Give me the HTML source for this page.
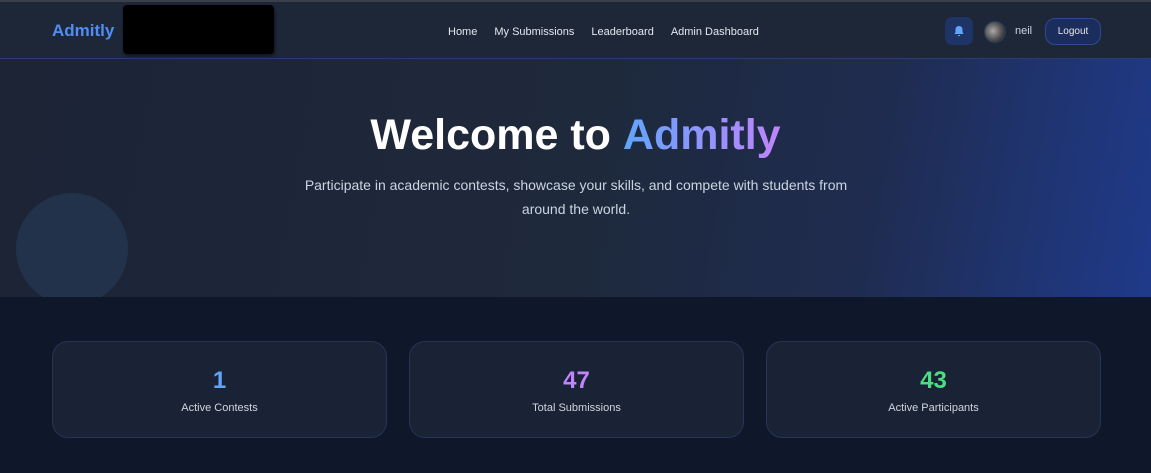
<!DOCTYPE html>
<html><head><style>
*{margin:0;padding:0;box-sizing:border-box}
body{width:1151px;height:473px;overflow:hidden;background:#0f172a;font-family:"Liberation Sans",sans-serif;position:relative}
.nav{position:absolute;top:0;left:0;width:1151px;height:59px;background:#1e2738;border-top:2px solid #3a3f4a;border-bottom:1px solid #2a3d73}
.logo{position:absolute;left:52px;top:19px;font-size:17px;font-weight:bold;color:#4f8ef0}
.black{position:absolute;left:123px;top:3px;width:151px;height:49px;background:#000;border-radius:4px;box-shadow:1px 2px 3px rgba(0,0,0,.5)}
.links{position:absolute;top:24px;left:448px;font-size:11px;color:#e5e7eb;white-space:nowrap}
.links span{margin-right:17px}
.bell{position:absolute;left:945px;top:15px;width:28px;height:28px;border-radius:7px;background:#1e3466}
.av{position:absolute;left:984px;top:19px;width:22px;height:22px;border-radius:50%;background:radial-gradient(circle at 40% 45%,#aaa,#555 50%,#111);border:1px solid #2b3c66}
.name{position:absolute;left:1015px;top:23px;font-size:11px;color:#cbd5e1}
.lo{position:absolute;left:1045px;top:16px;width:56px;height:27px;border-radius:10px;background:#1b2d5c;border:1px solid #2c4a8f;color:#e5e7eb;font-size:10px;text-align:center;line-height:25px}
.hero{position:absolute;top:59px;left:0;width:1151px;height:238px;overflow:hidden;background:linear-gradient(100deg,#1c2436 0%,#1e293b 50%,#1f2c50 75%,#1f3a8a 100%)}
.circle{position:absolute;left:16px;top:134px;width:112px;height:112px;border-radius:50%;background:#22324b}
h1{position:absolute;top:52px;width:100%;text-align:center;font-size:43px;font-weight:bold;color:#fff}
h1 b{background:linear-gradient(90deg,#60a5fa,#c084fc);-webkit-background-clip:text;color:transparent}
.sub{position:absolute;top:114px;left:290px;width:572px;text-align:center;font-size:14px;line-height:24px;color:#cbd5e1}
.card{position:absolute;top:341px;width:335px;height:97px;border-radius:16px;background:#1a2236;border:1px solid #243556;text-align:center}
.card .n{margin-top:25px;font-size:24px;font-weight:bold}
.card .l{margin-top:7px;font-size:11px;color:#d1d5db}
</style></head><body>
<div class="nav">
<div class="logo">Admitly</div><div class="black"></div>
<div class="links"><span>Home</span><span>My Submissions</span><span>Leaderboard</span><span>Admin Dashboard</span></div>
<div class="bell"><svg width="28" height="28" viewBox="0 0 28 28"><path d="M14 9c-2.2 0-3.5 1.6-3.5 3.6v2.6L9.3 17h9.4l-1.2-1.8v-2.6C17.5 10.6 16.2 9 14 9z M12.8 18a1.2 1.2 0 0 0 2.4 0z" fill="#60a5fa"/></svg></div>
<div class="av"></div><div class="name">neil</div><div class="lo">Logout</div>
</div>
<div class="hero"><div class="circle"></div>
<h1>Welcome to <b>Admitly</b></h1>
<div class="sub">Participate in academic contests, showcase your skills, and compete with students from around the world.</div>
</div>
<div class="card" style="left:52px"><div class="n" style="color:#60a5fa">1</div><div class="l">Active Contests</div></div>
<div class="card" style="left:409px"><div class="n" style="color:#c084fc">47</div><div class="l">Total Submissions</div></div>
<div class="card" style="left:766px"><div class="n" style="color:#4ade80">43</div><div class="l">Active Participants</div></div>
</body></html>
